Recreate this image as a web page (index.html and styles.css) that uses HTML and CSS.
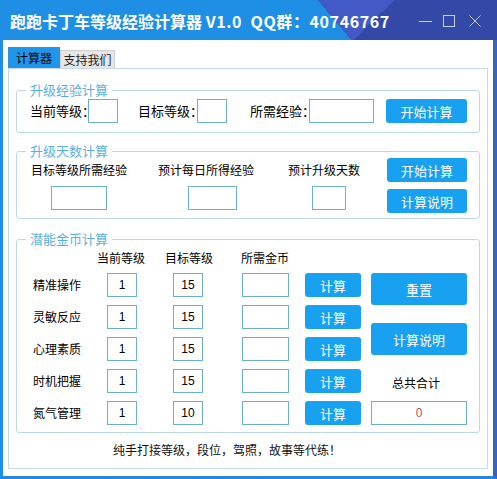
FILE: index.html
```html
<!DOCTYPE html>
<html>
<head>
    <meta charset="UTF-8">
    <title>跑跑卡丁车等级经验计算器</title>
    <link rel="stylesheet" href="styles.css">
</head>
<body>
<div class="window">
    <div class="titlebar">
        <span class="title">跑跑卡丁车等级经验计算器 <span class="latin">V1.0&nbsp;&nbsp;QQ群：40746767</span></span>
        <div class="controls">
            <svg class="ctl-min" width="13" height="12" viewBox="0 0 13 12"><path d="M0 6.5H13" /></svg>
            <svg class="ctl-max" width="12" height="12" viewBox="0 0 12 12"><rect x="0.5" y="0.5" width="11" height="11" /></svg>
            <svg class="ctl-close" width="12" height="12" viewBox="0 0 12 12"><path d="M0.5 0.5L11.5 11.5M11.5 0.5L0.5 11.5" /></svg>
        </div>
    </div>
    <div class="frame">
        <div class="tabs">
            <span class="tab active">计算器</span>
            <span class="tab">支持我们</span>
        </div>
        <div class="panel">
            <div class="group g-exp">
                <div class="group-title">升级经验计算</div>
                <div class="exp-row">
                    <span class="lbl l1">当前等级：</span><input class="box w30" type="text">
                    <span class="lbl l2">目标等级：</span><input class="box w30" type="text">
                    <span class="lbl l3">所需经验：</span><input class="box w65" type="text">
                    <button class="btn exp-btn">开始计算</button>
                </div>
            </div>

            <div class="group g-days">
                <div class="group-title">升级天数计算</div>
                <div class="days">
                    <div class="col c1">
                        <span>目标等级所需经验</span>
                        <input class="box" type="text">
                    </div>
                    <div class="col c2">
                        <span>预计每日所得经验</span>
                        <input class="box" type="text">
                    </div>
                    <div class="col c3">
                        <span>预计升级天数</span>
                        <input class="box" type="text">
                    </div>
                    <div class="btn-col">
                        <button class="btn">开始计算</button>
                        <button class="btn">计算说明</button>
                    </div>
                </div>
            </div>

            <div class="group g-coin">
                <div class="group-title">潜能金币计算</div>
                <div class="coin-head">
                    <span>当前等级</span>
                    <span>目标等级</span>
                    <span>所需金币</span>
                </div>
                <div class="coin-body">
                    <div class="rows">
                        <div class="row">
                            <span class="name">精准操作</span>
                            <input class="box cur" type="text" value="1">
                            <input class="box tgt" type="text" value="15">
                            <input class="box gold" type="text">
                            <button class="btn calc">计算</button>
                        </div>
                        <div class="row">
                            <span class="name">灵敏反应</span>
                            <input class="box cur" type="text" value="1">
                            <input class="box tgt" type="text" value="15">
                            <input class="box gold" type="text">
                            <button class="btn calc">计算</button>
                        </div>
                        <div class="row">
                            <span class="name">心理素质</span>
                            <input class="box cur" type="text" value="1">
                            <input class="box tgt" type="text" value="15">
                            <input class="box gold" type="text">
                            <button class="btn calc">计算</button>
                        </div>
                        <div class="row">
                            <span class="name">时机把握</span>
                            <input class="box cur" type="text" value="1">
                            <input class="box tgt" type="text" value="15">
                            <input class="box gold" type="text">
                            <button class="btn calc">计算</button>
                        </div>
                        <div class="row">
                            <span class="name">氮气管理</span>
                            <input class="box cur" type="text" value="1">
                            <input class="box tgt" type="text" value="10">
                            <input class="box gold" type="text">
                            <button class="btn calc">计算</button>
                        </div>
                    </div>
                    <div class="side">
                        <button class="btn big">重置</button>
                        <button class="btn big help">计算说明</button>
                        <span class="total-lbl">总共合计</span>
                        <div class="total">0</div>
                    </div>
                </div>
            </div>

            <div class="footer">纯手打接等级，段位，驾照，故事等代练！</div>
        </div>
    </div>
</div>
</body>
</html>
```

FILE: styles.css
```css
* {
    box-sizing: border-box;
}

body {
    margin: 0;
    font-family: "Noto Sans CJK SC", "Noto Sans", sans-serif;
    font-size: 12px;
    color: #000;
}

.window {
    width: 497px;
    height: 479px;
    display: flex;
    flex-direction: column;
}

/* title bar */
.titlebar {
    height: 40px;
    flex: none;
    display: flex;
    align-items: center;
    padding: 1px 16px 0 10px;
    color: #fff;
    background: linear-gradient(136deg, rgba(52, 72, 168, 0) 274px, #3448a8 274px),
                linear-gradient(50deg, #1f8fe6 269px, #4259c6 269px);
}

.title {
    font-size: 16px;
    font-weight: bold;
    line-height: 20px;
    white-space: nowrap;
}

.latin {
    letter-spacing: 0.6px;
}

.controls {
    margin-left: auto;
    display: flex;
    align-items: center;
}

.controls svg {
    fill: none;
    stroke: #c6cff0;
    stroke-width: 1;
}

.ctl-max {
    margin-left: 11px;
}

.ctl-close {
    margin-left: 14px;
}

/* window body */
.frame {
    flex: 1;
    background: #fff;
    border-left: 3px solid #1e8ee6;
    border-right: 4px solid #3a62bf;
    border-bottom: 3px solid #2a86d8;
    padding: 7px 0 0 5px;
}

.tabs {
    display: flex;
    align-items: flex-end;
    height: 21px;
}

.tab {
    width: 55px;
    height: 18px;
    line-height: 17px;
    text-align: center;
    background: #e6e6e6;
    border: 1px solid #d0d0d0;
    border-bottom: 0;
    color: #222;
}

.tab.active {
    width: 52px;
    height: 21px;
    line-height: 20px;
    background: #2196e8;
    border-color: #2196e8;
    color: #000;
}

.panel {
    width: 480px;
    height: 401px;
    border: 1px solid #c4dbe7;
    padding: 21px 7px 0 7px;
}

/* group boxes */
.group {
    border: 1px solid #bcd7e5;
    border-radius: 3px;
}

.group-title {
    width: fit-content;
    height: 16px;
    margin: -9px 0 0 9px;
    padding: 0 4px;
    background: #fff;
    color: #5ab1df;
    font-size: 13px;
    line-height: 16px;
}

.box {
    height: 24px;
    padding: 0;
    border: 1px solid #6cb0cc;
    background: #fff;
    font-family: "Liberation Sans", "Noto Sans", sans-serif;
    font-size: 12px;
    text-align: center;
    color: #000;
    outline: none;
}

.btn {
    height: 24px;
    padding: 0;
    border: 0;
    border-radius: 3px;
    background: #18a1f0;
    color: #fff;
    font-family: "Noto Sans CJK SC", "Noto Sans", sans-serif;
    font-size: 13px;
}

/* 升级经验计算 */
.g-exp {
    height: 43px;
}

.exp-row {
    display: flex;
    align-items: center;
    height: 24px;
    margin-top: 1px;
    padding-left: 13px;
}

.lbl {
    font-size: 13px;
    line-height: 24px;
    white-space: nowrap;
}

.l1 {
    width: 58px;
}

.l2 {
    width: 59px;
    margin-left: 20px;
}

.l3 {
    width: 59px;
    margin-left: 23px;
}

.w30 {
    width: 30px;
}

.w65 {
    width: 65px;
}

.exp-btn {
    width: 81px;
    margin-left: 12px;
}

/* 升级天数计算 */
.g-days {
    height: 68px;
    margin-top: 18px;
}

.days {
    display: flex;
    padding-left: 14px;
}

.col {
    display: flex;
    flex-direction: column;
    align-items: flex-start;
    padding-top: 3px;
    line-height: 16px;
    white-space: nowrap;
}

.col .box {
    margin-top: 8px;
}

.c1 {
    width: 127px;
}

.c1 .box {
    width: 56px;
    margin-left: 20px;
}

.c2 {
    width: 130px;
}

.c2 .box {
    width: 49px;
    margin-left: 30px;
}

.c3 {
    width: 99px;
}

.c3 .box {
    width: 34px;
    margin-left: 24px;
}

.btn-col {
    display: flex;
    flex-direction: column;
    gap: 7px;
    margin-top: -1px;
}

.btn-col .btn {
    width: 80px;
}

/* 潜能金币计算 */
.g-coin {
    height: 194px;
    margin-top: 20px;
}

.coin-head {
    display: flex;
    margin-top: 3px;
    padding-left: 80px;
    line-height: 16px;
}

.coin-head span {
    width: 48px;
    white-space: nowrap;
}

.coin-head span + span {
    margin-left: 20px;
}

.coin-head span:last-child {
    margin-left: 28px;
}

.coin-body {
    display: flex;
    margin-top: 7px;
    padding-left: 16px;
}

.rows {
    display: flex;
    flex-direction: column;
    gap: 8px;
}

.row {
    display: flex;
    align-items: center;
    height: 24px;
}

.name {
    width: 74px;
    line-height: 24px;
}

.cur {
    width: 30px;
}

.tgt {
    width: 30px;
    margin-left: 36px;
}

.gold {
    width: 47px;
    margin-left: 39px;
}

.calc {
    width: 56px;
    margin-left: 16px;
}

.side {
    display: flex;
    flex-direction: column;
    width: 96px;
    margin-left: 10px;
}

.big {
    height: 32px;
}

.help {
    margin-top: 18px;
}

.total-lbl {
    margin-top: 20px;
    padding-left: 21px;
    line-height: 16px;
}

.total {
    height: 24px;
    margin-top: 10px;
    border: 1px solid #6cb0cc;
    line-height: 22px;
    text-align: center;
    color: #c0504d;
    font-family: "Liberation Sans", "Noto Sans", sans-serif;
}

.footer {
    margin-top: 9px;
    padding-left: 97px;
    line-height: 16px;
    color: #111;
}
```
